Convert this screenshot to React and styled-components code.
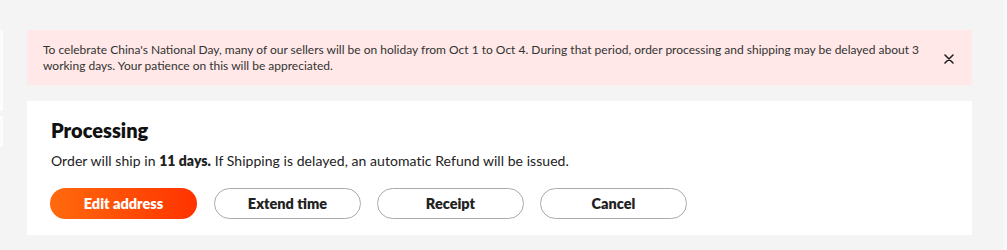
import React from 'react'
import styled, { createGlobalStyle } from 'styled-components'

const GlobalStyle = createGlobalStyle`
    body {
        margin: 0;
        background: #f4f4f4;
        font-family: Lato, "Liberation Sans", sans-serif;
        color: #222;
    }
`

const buttons = [
    { label: 'Edit address', primary: true },
    { label: 'Extend time' },
    { label: 'Receipt' },
    { label: 'Cancel' },
]

function App() {
    return (
        <Page>
            <GlobalStyle />
            <Sidebar>
                <SideBlock h={81} />
                <SideBlock h={31} />
            </Sidebar>
            <Main>
                <Notice>
                    <NoticeText>
                        To celebrate China's National Day, many of our sellers will be on holiday from Oct 1 to Oct 4. During that period, order processing and shipping may be delayed about 3 working days. Your patience on this will be appreciated.
                    </NoticeText>
                    <Close aria-label="close">
                        <svg width="10" height="10" viewBox="0 0 10 10">
                            <path d="M1 1L9 9M9 1L1 9" stroke="#222" strokeWidth="1.6" strokeLinecap="round" />
                        </svg>
                    </Close>
                </Notice>
                <Card>
                    <Title>Processing</Title>
                    <Info>
                        Order will ship in <b>11 days.</b> If Shipping is delayed, an automatic Refund will be issued.
                    </Info>
                    <Actions>
                        {buttons.map(b => (
                            <Button key={b.label} primary={b.primary}>{b.label}</Button>
                        ))}
                    </Actions>
                </Card>
            </Main>
            <Spacer />
            <RightRail />
        </Page>
    )
}

export default App

const Page = styled.div`
    display: flex;
    width: 1007px;
    height: 250px;
    overflow: hidden;
`
const Sidebar = styled.div`
    width: 3px;
    padding-top: 30px;
    display: flex;
    flex-direction: column;
    gap: 5px;
`
const SideBlock = styled.div`
    height: ${props => props.h}px;
    background: #fcfcfc;
`
const Main = styled.div`
    margin-left: 24px;
    width: 945px;
    padding-top: 30px;
    display: flex;
    flex-direction: column;
    gap: 16px;
`
const Notice = styled.div`
    background: #ffe8e7;
    height: 55px;
    box-sizing: border-box;
    padding: 11px 16px;
    display: flex;
    align-items: center;
    justify-content: space-between;
`
const NoticeText = styled.p`
    margin: 0;
    width: 900px;
    font-size: 12px;
    line-height: 16px;
    color: #333;
`
const Close = styled.span`
    display: flex;
    margin-right: 2px;
    margin-top: 2px;
`
const Card = styled.div`
    background: #fff;
    height: 134px;
    box-sizing: border-box;
    padding: 17px 24px 0;
`
const Title = styled.h2`
    margin: 0;
    font-size: 20px;
    line-height: 24px;
    font-weight: 800;
    color: #111;
`
const Info = styled.p`
    margin: 10px 0 0;
    font-size: 14px;
    line-height: 18px;
    letter-spacing: 0.05px;
    color: #222;
    b {
        font-weight: 800;
    }
`
const Actions = styled.div`
    display: flex;
    gap: 16px;
    margin-top: 18px;
`
const Button = styled.button`
    width: 147px;
    height: 31px;
    border-radius: 16px;
    font-family: inherit;
    font-size: 14.5px;
    font-weight: 800;
    cursor: pointer;
    color: ${props => props.primary ? '#fff' : '#222'};
    background: ${props => props.primary ? 'linear-gradient(90deg, #ff6a0d, #ff3300)' : '#fff'};
    border: ${props => props.primary ? 'none' : '1px solid #aaa'};
    margin-left: ${props => props.primary ? '-1px' : '0'};
    margin-right: ${props => props.primary ? '1px' : '0'};
`
const Spacer = styled.div`
    flex: 1;
`
const RightRail = styled.div`
    width: 4px;
    background: #f8f8f8;
`
